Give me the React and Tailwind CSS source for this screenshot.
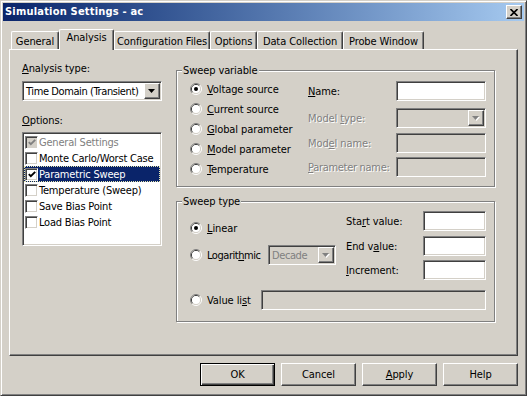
import React from "react";

const SUNKEN =
  "border border-[#808080] border-b-white border-r-white shadow-[inset_1px_1px_0_#404040,inset_-1px_-1px_0_#d4d0c8]";
const RAISED =
  "border border-white border-b-[#404040] border-r-[#404040] shadow-[inset_-1px_-1px_0_#808080]";
const ETCHED =
  "border border-[#808080] shadow-[inset_1px_1px_0_#fff,1px_1px_0_#fff]";
const DISABLED_TEXT = "text-[#808080] [text-shadow:1px_1px_0_#fff]";

const Radio = ({ checked }) => (
  <svg width="12" height="12" viewBox="0 0 12 12" className="shrink-0">
    <path d="M2.11 9.89A5.5 5.5 0 0 1 9.89 2.11" stroke="#808080" fill="none" />
    <path d="M9.89 2.11A5.5 5.5 0 0 1 2.11 9.89" stroke="#fff" fill="none" />
    <path d="M2.82 9.18A4.5 4.5 0 0 1 9.18 2.82" stroke="#404040" fill="none" />
    <path d="M9.18 2.82A4.5 4.5 0 0 1 2.82 9.18" stroke="#d4d0c8" fill="none" />
    <circle cx="6" cy="6" r="4" fill="#fff" />
    {checked && <circle cx="6" cy="6" r="2" fill="#000" />}
  </svg>
);

const Check = ({ checked, disabled }) => (
  <span
    className={`w-[13px] h-[13px] shrink-0 flex items-center justify-center ${SUNKEN} ${
      disabled ? "bg-[#d4d0c8]" : "bg-white"
    }`}
  >
    {checked && (
      <svg width="8" height="7" viewBox="0 0 8 7">
        <path
          d="M0.8 3.2L2.8 5.2L7.2 0.8"
          stroke={disabled ? "#808080" : "#000"}
          strokeWidth="1.9"
          fill="none"
        />
      </svg>
    )}
  </span>
);

const ArrowBtn = ({ disabled }) => (
  <span className={`w-[16px] shrink-0 flex items-center justify-center bg-[#d4d0c8] ${RAISED}`}>
    <svg width="8" height="5" viewBox="0 0 8 5">
      {disabled && <path d="M1 1h7L4.5 5z" fill="#fff" />}
      <path d="M0 0h7L3.5 4z" fill={disabled ? "#808080" : "#000"} />
    </svg>
  </span>
);

const Combo = ({ text, disabled, w }) => (
  <div
    className={`${w} h-[20px] p-px flex shrink-0 ${SUNKEN} ${
      disabled ? "bg-[#d4d0c8] text-[#808080]" : "bg-white"
    }`}
  >
    <span className="flex-1 pl-[2px] flex items-center whitespace-nowrap overflow-hidden tracking-[-0.4px]">
      {text}
    </span>
    <ArrowBtn disabled={disabled} />
  </div>
);

const Field = ({ w, disabled }) => (
  <div className={`${w} h-[20px] shrink-0 ${SUNKEN} ${disabled ? "bg-[#d4d0c8]" : "bg-white"}`} />
);

const RadioRow = ({ checked, children }) => (
  <div className="h-[20px] flex items-center gap-[5px] whitespace-nowrap">
    <Radio checked={checked} />
    <span>{children}</span>
  </div>
);

const tabs = [
  { label: "General", w: "w-[48px]" },
  { label: "Analysis", w: "w-[55px]", active: true },
  { label: "Configuration Files", w: "w-[96px]" },
  { label: "Options", w: "w-[47px]" },
  { label: "Data Collection", w: "w-[86px]" },
  { label: "Probe Window", w: "w-[81px]" },
];

const options = [
  { label: "General Settings", checked: true, disabled: true },
  { label: "Monte Carlo/Worst Case" },
  { label: "Parametric Sweep", checked: true, selected: true },
  { label: "Temperature (Sweep)" },
  { label: "Save Bias Point" },
  { label: "Load Bias Point" },
];

export default function App() {
  return (
    <div className="w-[527px] h-[396px] bg-[#d4d0c8] border border-[#d4d0c8] border-b-[#404040] border-r-[#404040] shadow-[inset_1px_1px_0_#fff,inset_-1px_-1px_0_#808080] p-[2px] flex flex-col text-[11px] leading-[13px] tracking-[-0.1px] text-black font-['DejaVu_Sans_Condensed','Liberation_Sans',Arial,sans-serif] overflow-hidden select-none">
      {/* title bar */}
      <div className="h-[18px] shrink-0 bg-linear-to-r from-[#0a246a] to-[#a6caf0] flex items-center justify-between pl-[2px] pr-[2px]">
        <span className="text-white font-bold text-[11px] leading-[14px] tracking-[0.2px] whitespace-nowrap">
          Simulation Settings - ac
        </span>
        <span className={`w-[16px] h-[14px] flex items-center justify-center bg-[#d4d0c8] ${RAISED}`}>
          <svg width="8" height="7" viewBox="0 0 8 7">
            <path d="M0.5 0L7.5 7M7.5 0L0.5 7" stroke="#000" strokeWidth="1.6" />
          </svg>
        </span>
      </div>

      {/* tabs */}
      <div className="mt-[8px] h-[20px] shrink-0 flex items-end pl-[8px]">
        {tabs.map((t) =>
          t.active ? (
            <div
              key={t.label}
              className={`${t.w} h-[21px] -mb-px relative z-10 bg-[#d4d0c8] border-t border-l border-white border-r border-r-[#404040] shadow-[inset_-1px_0_0_#808080] rounded-t-[2px] flex justify-center pt-[1px] whitespace-nowrap`}
            >
              {t.label}
            </div>
          ) : (
            <div
              key={t.label}
              className={`${t.w} h-[18px] bg-[#d4d0c8] border-t border-l border-white border-r border-r-[#404040] shadow-[inset_-1px_0_0_#808080] rounded-t-[2px] flex justify-center pt-[3px] whitespace-nowrap`}
            >
              {t.label}
            </div>
          )
        )}
      </div>

      {/* tab panel */}
      <div className="mx-[6px] h-[307px] shrink-0 border border-white border-r-[#404040] border-b-[#404040] shadow-[inset_-1px_-1px_0_#808080] flex items-start pl-[12px] gap-[14px]">
        {/* left column */}
        <div className="w-[140px] pt-[12px] flex flex-col">
          <span className="h-[13px]">
            <u>A</u>nalysis type:
          </span>
          <div className="mt-[6px]">
            <Combo w="w-[140px]" text="Time Domain (Transient)" />
          </div>
          <span className="mt-[13px] h-[13px]">
            <u>O</u>ptions:
          </span>
          <div className={`mt-[5px] h-[114px] bg-white p-px ${SUNKEN}`}>
            {options.map((o) => (
              <div
                key={o.label}
                className={`h-[16px] flex items-center gap-px pl-px whitespace-nowrap overflow-hidden tracking-[-0.2px] ${
                  o.selected
                    ? "bg-[#0a246a] text-white outline-1 outline-dotted -outline-offset-1 outline-[#e8e8b0]"
                    : ""
                } ${o.disabled ? "text-[#808080]" : ""}`}
              >
                <Check checked={o.checked} disabled={o.disabled} />
                <span>{o.label}</span>
              </div>
            ))}
          </div>
        </div>

        {/* right column */}
        <div className="pt-[20px] flex flex-col">
          {/* Sweep variable */}
          <div className={`relative w-[319px] h-[117px] ${ETCHED}`}>
            <span className="absolute -top-[7px] left-[5px] px-px bg-[#d4d0c8]">Sweep variable</span>
            <div className="flex">
              <div className="w-[131px] pl-[13px] pt-[8px] flex flex-col">
                <RadioRow checked>
                  <u>V</u>oltage source
                </RadioRow>
                <RadioRow>
                  <u>C</u>urrent source
                </RadioRow>
                <RadioRow>
                  <u>G</u>lobal parameter
                </RadioRow>
                <RadioRow>
                  <u>M</u>odel parameter
                </RadioRow>
                <RadioRow>
                  <u>T</u>emperature
                </RadioRow>
              </div>
              <div className="pt-[10px] flex flex-col">
                <div className="h-[20px] flex items-center">
                  <span className="w-[88px]">
                    <u>N</u>ame:
                  </span>
                  <Field w="w-[90px]" />
                </div>
                <div className="mt-[7px] h-[20px] flex items-center">
                  <span className={`w-[88px] ${DISABLED_TEXT}`}>
                    Model <u>t</u>ype:
                  </span>
                  <Combo w="w-[90px]" text="" disabled />
                </div>
                <div className="mt-[5px] h-[20px] flex items-center">
                  <span className={`w-[88px] ${DISABLED_TEXT}`}>
                    Mod<u>e</u>l name:
                  </span>
                  <Field w="w-[90px]" disabled />
                </div>
                <div className="mt-[4px] h-[20px] flex items-center">
                  <span className={`w-[88px] whitespace-nowrap tracking-[-0.3px] ${DISABLED_TEXT}`}>
                    <u>P</u>arameter name:
                  </span>
                  <Field w="w-[90px]" disabled />
                </div>
              </div>
            </div>
          </div>

          {/* Sweep type */}
          <div className={`relative mt-[14px] w-[319px] h-[121px] ${ETCHED}`}>
            <span className="absolute -top-[7px] left-[5px] px-px bg-[#d4d0c8]">Sweep type</span>
            <div className="flex">
              <div className="w-[169px] pl-[13px] flex flex-col">
                <div className="mt-[16px]">
                  <RadioRow checked>
                    <u>L</u>inear
                  </RadioRow>
                </div>
                <div className="mt-[7px] h-[20px] flex items-center gap-[5px]">
                  <Radio />
                  <span className="w-[56px] whitespace-nowrap tracking-[-0.45px]">
                    Logarit<u>h</u>mic
                  </span>
                  <Combo w="w-[68px]" text="Decade" disabled />
                </div>
              </div>
              <div className="pt-[9px] flex flex-col">
                <div className="h-[20px] flex items-center">
                  <span className="w-[77px]">
                    Sta<u>r</u>t value:
                  </span>
                  <Field w="w-[63px]" />
                </div>
                <div className="mt-[5px] h-[20px] flex items-center">
                  <span className="w-[77px]">
                    End v<u>a</u>lue:
                  </span>
                  <Field w="w-[63px]" />
                </div>
                <div className="mt-[4px] h-[20px] flex items-center">
                  <span className="w-[77px]">
                    <u>I</u>ncrement:
                  </span>
                  <Field w="w-[63px]" />
                </div>
              </div>
            </div>
            <div className="mt-[10px] pl-[13px] h-[20px] flex items-center gap-[5px]">
              <Radio />
              <span className="w-[49px] whitespace-nowrap">
                Value li<u>s</u>t
              </span>
              <Field w="w-[225px]" disabled />
            </div>
          </div>
        </div>
      </div>

      {/* buttons */}
      <div className="mt-[7px] flex justify-end gap-[6px] pr-[6px]">
        <button className="w-[75px] h-[23px] bg-[#d4d0c8] border border-black shadow-[inset_1px_1px_0_#fff,inset_-1px_-1px_0_#404040,inset_-2px_-2px_0_#808080]">
          OK
        </button>
        <button className={`w-[75px] h-[23px] bg-[#d4d0c8] ${RAISED}`}>Cancel</button>
        <button className={`w-[75px] h-[23px] bg-[#d4d0c8] ${RAISED}`}>
          <u>A</u>pply
        </button>
        <button className={`w-[75px] h-[23px] bg-[#d4d0c8] ${RAISED}`}>Help</button>
      </div>
    </div>
  );
}
